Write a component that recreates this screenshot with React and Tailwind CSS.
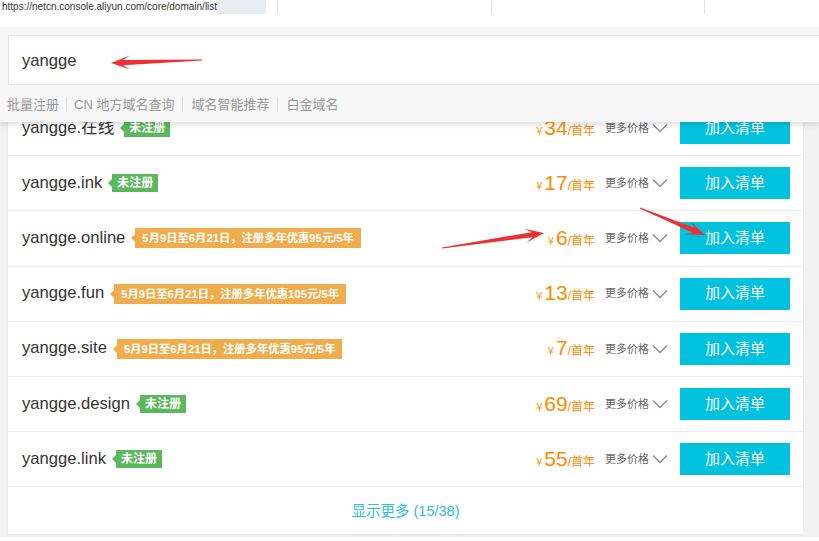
import React from 'react';

const FONT = "font-['Liberation_Sans','Noto_Sans_CJK_SC',sans-serif]";

const rows = [
    { name: 'yangge.在线', tag: '未注册', green: true, price: '34' },
    { name: 'yangge.ink', tag: '未注册', green: true, price: '17' },
    { name: 'yangge.online', tag: '5月9日至6月21日，注册多年优惠95元/5年', price: '6' },
    { name: 'yangge.fun', tag: '5月9日至6月21日，注册多年优惠105元/5年', price: '13' },
    { name: 'yangge.site', tag: '5月9日至6月21日，注册多年优惠95元/5年', price: '7' },
    { name: 'yangge.design', tag: '未注册', green: true, price: '69' },
    { name: 'yangge.link', tag: '未注册', green: true, price: '55' },
];

// red annotation arrow, tail -> tip
const arrowPoints = (x1, y1, x2, y2) => {
    const dx = x2 - x1;
    const dy = y2 - y1;
    const len = Math.hypot(dx, dy);
    const ux = dx / len, uy = dy / len;
    const nx = -uy, ny = ux;
    const H = 17, W = 7;
    const p = (bx, by, along, side) => [bx + ux * along + nx * side, by + uy * along + ny * side];
    const pts = [
        p(x1, y1, 0, 0.6),
        p(x2, y2, -(H - 5), 2.6),
        p(x2, y2, -(H + 2), W),
        [x2, y2],
        p(x2, y2, -(H + 2), -W),
        p(x2, y2, -(H - 5), -2.6),
        p(x1, y1, 0, -0.6),
    ];
    return pts.map(([a, b]) => `${a.toFixed(1)},${b.toFixed(1)}`).join(' ');
};

const Tag = ({ text, green }) => (
    <div className="flex items-center ml-[6px]">
        <div
            className={`w-0 h-0 border-y-[4px] border-y-transparent border-r-[4px] ${green ? 'border-r-[#5cb85c]' : 'border-r-[#f0ad4e]'}`}
        />
        {green ? (
            <span className="bg-[#5cb85c] text-white text-[12px] font-bold h-[18px] leading-[18px] px-[5px]">{text}</span>
        ) : (
            <span className="bg-[#f0ad4e] text-white text-[11.3px] font-bold h-[20px] leading-[20px] px-[7px]">{text}</span>
        )}
    </div>
);

const Row = ({ row }) => (
    <div className="flex items-center h-[55.2px] border-b border-[#ececec] pl-[14px] pr-[13px]">
        <span className="text-[16.6px] text-[#333]">{row.name}</span>
        <Tag text={row.tag} green={row.green} />
        <div className="ml-auto flex items-center">
            <div className="flex items-baseline text-[#ff8a00]">
                <span className="text-[11px] text-[#ff9a2e] mr-[2px]">¥</span>
                <span className="text-[21px] leading-none">{row.price}</span>
                <span className="text-[12px]">/首年</span>
            </div>
            <span className="ml-[10px] text-[11px] text-[#666]">更多价格</span>
            <svg width="16" height="10" viewBox="0 0 16 10" className="ml-[3px]">
                <path d="M1 1.5 L8 8.5 L15 1.5" fill="none" stroke="#8a8a8a" strokeWidth="1.4" />
            </svg>
            <button className="ml-[12px] w-[110px] h-[32px] bg-[#00c1de] text-white text-[15px]">加入清单</button>
        </div>
    </div>
);

const App = () => {
    return (
        <div className={`relative w-[819px] h-[541px] overflow-hidden bg-white ${FONT}`}>
            {/* address strip */}
            <div className="flex items-center h-[14px]">
                <span className="pl-[2px] w-[217px] text-[10px] leading-[14px] text-[#333] whitespace-nowrap">
                    https://netcn.console.aliyun.com/core/domain/list
                </span>
                <div className="w-[49px] h-[14px] bg-[#e9ecf1]" />
                <div className="ml-[11px] w-px h-[14px] bg-[#e3e3e3]" />
                <div className="ml-[213px] w-px h-[14px] bg-[#e3e3e3]" />
                <div className="ml-[212px] w-px h-[14px] bg-[#e3e3e3]" />
            </div>

            <div className="mt-[87px] bg-[#f2f2f2] pl-[8px] pr-[16px] pb-[3px]">
                <div className="bg-white shadow-[0_1px_2px_rgba(0,0,0,0.08)]">
                    {rows.map(r => (
                        <Row key={r.name} row={r} />
                    ))}
                    <div className="h-[47px] pt-[3px] flex items-center justify-center text-[14.5px] text-[#2fbde0]">
                        显示更多 (15/38)
                    </div>
                </div>
            </div>

            {/* search dropdown overlay */}
            <div className="absolute top-[27px] left-0 right-0 h-[95px] bg-[#f7f7f7] shadow-[0_3px_5px_rgba(0,0,0,0.12)]">
                <div className="ml-[8px] mt-[8px] -mr-[4px] h-[50px] pt-[3px] bg-white border border-[#e3e3e3] flex items-center pl-[13px]">
                    <span className="text-[16.6px] text-[#333]">yangge</span>
                </div>
                <div className="flex items-center mt-[10px] pl-[7px] text-[13px] text-[#999]">
                    <span>批量注册</span>
                    <span className="mx-[7px] w-px h-[15px] bg-[#ddd]" />
                    <span>CN 地方域名查询</span>
                    <span className="mx-[8px] w-px h-[15px] bg-[#ddd]" />
                    <span>域名智能推荐</span>
                    <span className="mx-[8px] w-px h-[15px] bg-[#ddd]" />
                    <span>白金域名</span>
                </div>
            </div>

            {/* annotation arrows */}
            <svg className="absolute inset-0 pointer-events-none" width="819" height="541">
                <polygon points={arrowPoints(202, 60, 111, 63)} fill="#ee3030" />
                <polygon points={arrowPoints(442, 248, 544, 233)} fill="#ee3030" />
                <polygon points={arrowPoints(640, 208, 705, 235)} fill="#ee3030" />
            </svg>
        </div>
    );
};

export default App;
